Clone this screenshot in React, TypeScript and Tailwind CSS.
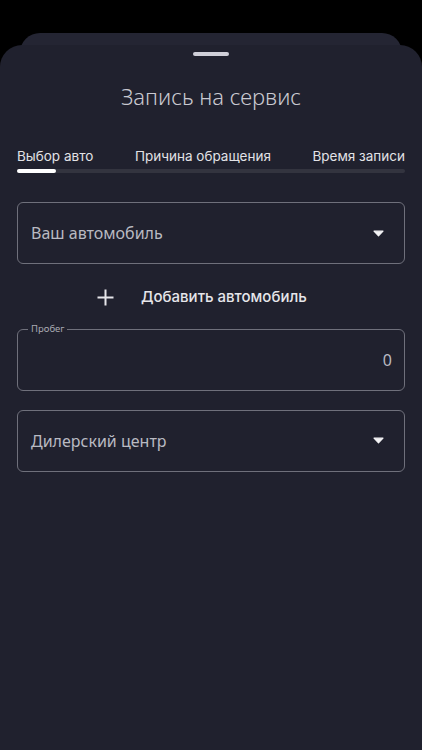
import React, { useState } from 'react';

type Step = { id: number; title: string };

const steps: Step[] = [
  { id: 0, title: 'Выбор авто' },
  { id: 1, title: 'Причина обращения' },
  { id: 2, title: 'Время записи' },
];

const Caret = () => (
  <svg width="11" height="7" viewBox="0 0 11 7" className="shrink-0">
    <path d="M1 1.2h9L5.5 5.8z" fill="#f4f4f6" strokeLinejoin="round" stroke="#f4f4f6" strokeWidth="1.2" />
  </svg>
);

const SelectField = ({ placeholder }: { placeholder: string }) => (
  <button className="flex h-[62px] w-full items-center justify-between rounded-[6px] border border-[#6f707b] pl-[13px] pr-[20px] text-left">
    <span className="text-[16px] text-[#b9bac2] [font-family:'Noto_Sans',sans-serif]">{placeholder}</span>
    <Caret />
  </button>
);

const AppointmentSheet = () => {
  const [step] = useState<number>(0);
  const [mileage] = useState<number>(0);

  return (
    <div className="relative h-[750px] w-[422px] overflow-hidden bg-black [font-family:Inter,sans-serif]">
      {/* sheet peeking from behind */}
      <div className="absolute left-[20px] right-[20px] top-[33px] h-[60px] rounded-t-[20px] bg-[#242533]" />

      <div className="absolute inset-x-0 bottom-0 top-[45px] rounded-t-[22px] bg-[#20212e]">
        <div className="flex justify-center pt-[7px]">
          <div className="h-[4px] w-[36px] rounded-full bg-[#cfcfd8]" />
        </div>

        <h1 className="mt-[24px] text-center text-[22px] font-light text-[#c9c9d1] [font-family:'Noto_Sans',sans-serif]">
          Запись на сервис
        </h1>

        <div className="mx-[17px] mt-[33px]">
          <div className="flex justify-between text-[13.5px] text-[#e2e2e6]">
            {steps.map((s) => (
              <span key={s.id}>{s.title}</span>
            ))}
          </div>
          <div className="mt-[3px] h-[4px] w-full rounded-full bg-[#33343f]">
            <div className="h-full w-[39px] rounded-full bg-white" style={{ opacity: step === 0 ? 1 : 0.9 }} />
          </div>
        </div>

        <div className="mx-[17px] mt-[29px]">
          <SelectField placeholder="Ваш автомобиль" />

          <button className="ml-[80px] mt-[22px] flex items-center gap-[27px]">
            <svg width="17" height="17" viewBox="0 0 17 17">
              <path d="M8.5 0.5v16M0.5 8.5h16" stroke="#e6e6ea" strokeWidth="2" />
            </svg>
            <span className="text-[15px] font-medium text-[#e6e6ea]">Добавить автомобиль</span>
          </button>

          <div className="relative mt-[20px] flex h-[62px] items-center justify-end rounded-[6px] border border-[#6f707b] px-[12px]">
            <span className="absolute -top-[8px] left-[10px] bg-[#20212e] px-[3px] text-[9.5px] text-[#a9aab2] [font-family:'Noto_Sans',sans-serif]">
              Пробег
            </span>
            <span className="text-[16px] text-[#b9bac2] [font-family:'Noto_Sans',sans-serif]">{mileage}</span>
          </div>

          <div className="mt-[19px]">
            <SelectField placeholder="Дилерский центр" />
          </div>
        </div>
      </div>
    </div>
  );
};

export default function App() {
  return <AppointmentSheet />;
}
